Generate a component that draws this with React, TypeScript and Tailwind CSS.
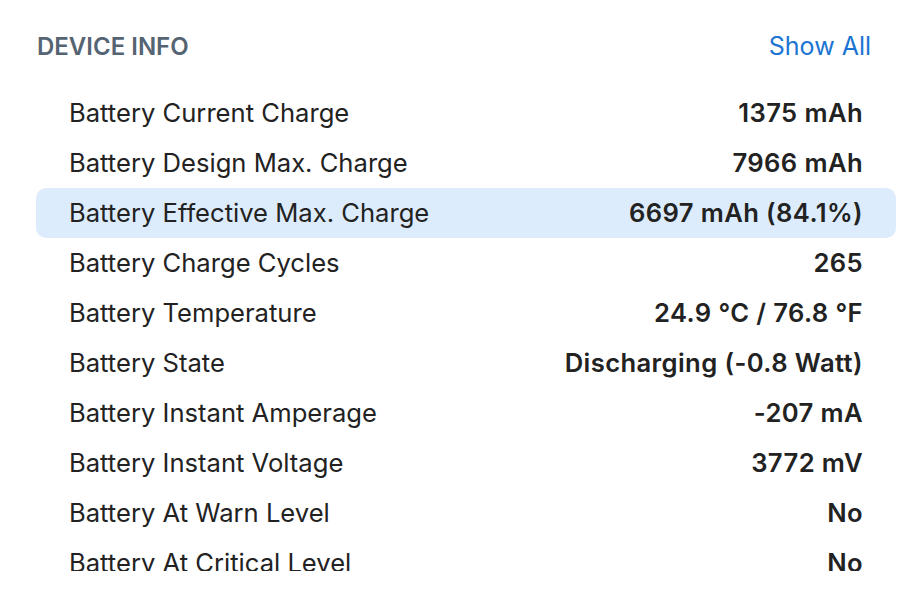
const rows = [
  { label: "Battery Current Charge", value: "1375 mAh" },
  { label: "Battery Design Max. Charge", value: "7966 mAh" },
  { label: "Battery Effective Max. Charge", value: "6697 mAh (84.1%)", active: true },
  { label: "Battery Charge Cycles", value: "265" },
  { label: "Battery Temperature", value: "24.9 °C / 76.8 °F" },
  { label: "Battery State", value: "Discharging (-0.8 Watt)" },
  { label: "Battery Instant Amperage", value: "-207 mA" },
  { label: "Battery Instant Voltage", value: "3772 mV" },
  { label: "Battery At Warn Level", value: "No" },
  { label: "Battery At Critical Level", value: "No" },
  { label: "Battery Fully Charged", value: "No" },
];

export default function App() {
  return (
    <div
      className="w-[906px] h-[596px] bg-white overflow-hidden"
      style={{ fontFamily: "Inter, 'Noto Sans', sans-serif" }}
    >
      {/* Header */}
      <div className="flex items-center justify-between h-[38px] mt-[28px] pl-[37px] pr-[35px]">
        <h2 className="text-[24px] font-semibold text-[#556472]">DEVICE INFO</h2>
        <button className="text-[25px] text-[#1b74d2]">Show All</button>
      </div>

      {/* Rows */}
      <div className="mt-[22px] ml-[36px] mr-[10px] h-[483px] overflow-hidden">
        {rows.map((row) => (
          <div
            key={row.label}
            className={`flex items-center justify-between h-[50px] pt-[1px] px-[33px] rounded-[10px] text-[25.6px] text-[#222222] ${
              row.active ? "bg-[#ddecfc]" : ""
            }`}
          >
            <span>{row.label}</span>
            <span className="font-semibold tracking-[0.4px]">{row.value}</span>
          </div>
        ))}
      </div>
    </div>
  );
}
